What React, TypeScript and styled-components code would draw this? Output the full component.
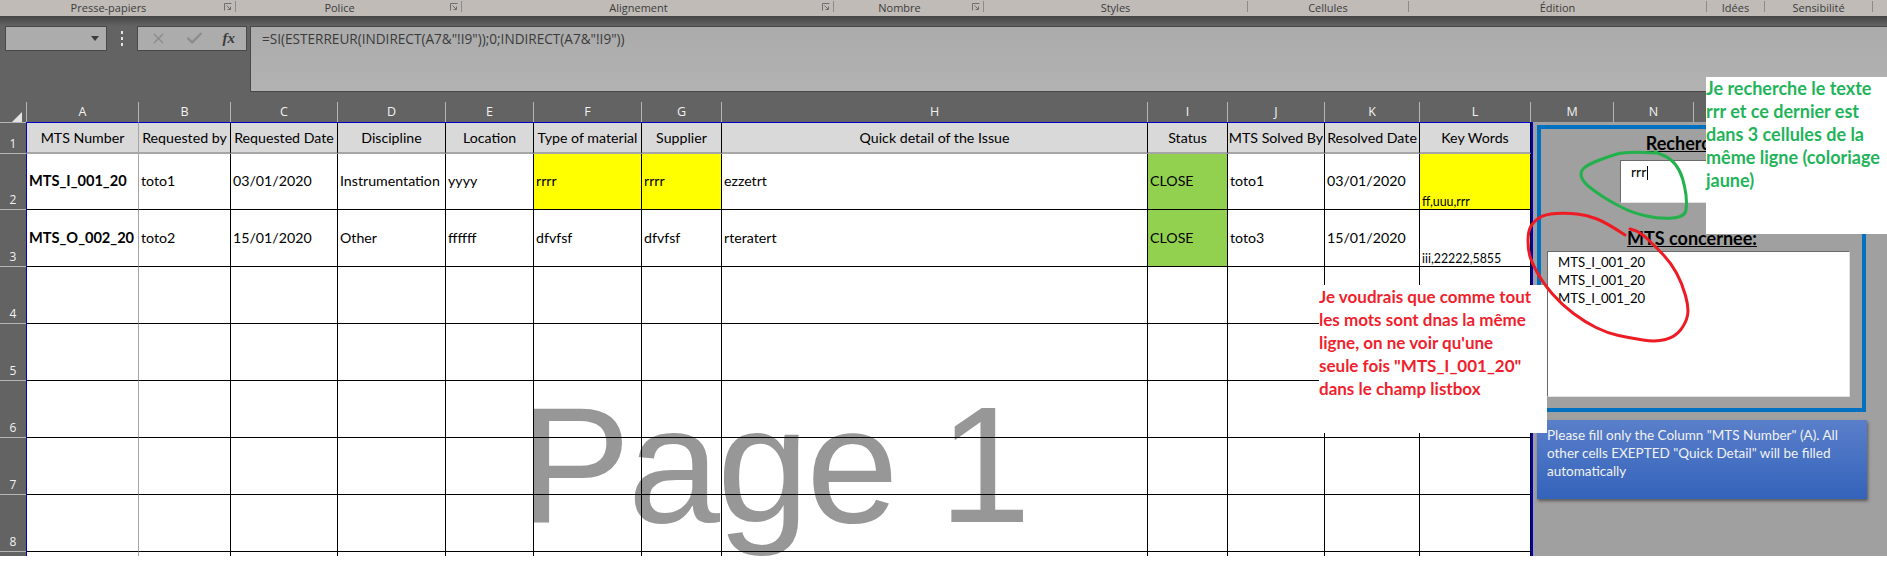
import styled, { createGlobalStyle } from "styled-components";
import { Check, X } from "lucide-react";

const COLUMNS = [
  { letter: "A", width: 113, title: "MTS Number" },
  { letter: "B", width: 92, title: "Requested by" },
  { letter: "C", width: 107, title: "Requested Date" },
  { letter: "D", width: 108, title: "Discipline" },
  { letter: "E", width: 88, title: "Location" },
  { letter: "F", width: 108, title: "Type of material" },
  { letter: "G", width: 80, title: "Supplier" },
  { letter: "H", width: 426, title: "Quick detail of the Issue" },
  { letter: "I", width: 80, title: "Status" },
  { letter: "J", width: 97, title: "MTS Solved By" },
  { letter: "K", width: 95, title: "Resolved Date" },
  { letter: "L", width: 111, title: "Key Words" },
];

const ROWS = [
  ["MTS_I_001_20", "toto1", "03/01/2020", "Instrumentation", "yyyy", "rrrr", "rrrr", "ezzetrt", "CLOSE", "toto1", "03/01/2020", "ff,uuu,rrr"],
  ["MTS_O_002_20", "toto2", "15/01/2020", "Other", "ffffff", "dfvfsf", "dfvfsf", "rteratert", "CLOSE", "toto3", "15/01/2020", "iii,22222,5855"],
];

const ROW_HEIGHTS = [32, 56, 57, 57, 57, 57, 57, 57, 57];

const RIBBON_GROUPS = [
  { label: "Presse-papiers", width: 236, launcher: true },
  { label: "Police", width: 226, launcher: true },
  { label: "Alignement", width: 372, launcher: true },
  { label: "Nombre", width: 150, launcher: true },
  { label: "Styles", width: 264, launcher: false },
  { label: "Cellules", width: 161, launcher: false },
  { label: "Édition", width: 298, launcher: false },
  { label: "Idées", width: 58, launcher: false },
  { label: "Sensibilité", width: 108, launcher: false },
];

const GREEN_STROKE: [number, number][] = [
  [1655, 153], [1627, 151], [1607, 157], [1587, 165], [1580, 172], [1583, 182], [1597, 193],
  [1613, 203], [1633, 213], [1660, 219], [1685, 217], [1687, 203], [1685, 187], [1680, 170],
  [1670, 158], [1655, 152],
];

const RED_STROKE: [number, number][] = [
  [1625, 235], [1607, 223], [1587, 215], [1567, 213], [1545, 214], [1533, 222], [1528, 232],
  [1528, 250], [1532, 263], [1543, 283], [1562, 305], [1585, 322], [1607, 333], [1630, 338],
  [1656, 342], [1675, 337], [1686, 323], [1689, 308], [1682, 283], [1671, 263], [1656, 247],
  [1640, 232], [1630, 229],
];

const smoothPath = (points: [number, number][]) => {
  let d = `M${points[0][0]} ${points[0][1]}`;
  for (let i = 1; i < points.length - 1; i++) {
    const midX = (points[i][0] + points[i + 1][0]) / 2;
    const midY = (points[i][1] + points[i + 1][1]) / 2;
    d += ` Q${points[i][0]} ${points[i][1]} ${midX} ${midY}`;
  }
  const last = points[points.length - 1];
  return `${d} L${last[0]} ${last[1]}`;
};

const GlobalStyle = createGlobalStyle`
  html, body {
    margin: 0;
    padding: 0;
    background: #fff;
  }
  * {
    box-sizing: border-box;
  }
`;

const Page = styled.div`
  position: relative;
  width: 1887px;
  height: 575px;
  overflow: hidden;
  background: #fff;
  font-family: Lato, "Liberation Sans", sans-serif;
  color: #000;
`;

const Ribbon = styled.div`
  display: flex;
  height: 16px;
  background: #c0bbb7;
`;

const RibbonGroup = styled.div<{ $width: number; $launcher: boolean }>`
  position: relative;
  width: ${(p) => p.$width}px;
  height: 11px;
  margin-top: 1px;
  padding-right: ${(p) => (p.$launcher ? 18 : 0)}px;
  border-right: 1px solid #8e8a87;
  color: #3c3c3c;
  font-family: "Open Sans", sans-serif;
  font-size: 11px;
  line-height: 13px;
  text-align: center;
  white-space: nowrap;
`;

const Launcher = styled.svg`
  position: absolute;
  right: 3px;
  top: 2px;
  width: 8px;
  height: 8px;
`;

const FormulaArea = styled.div`
  height: 76px;
  padding-top: 10px;
  display: flex;
  align-items: flex-start;
  background: linear-gradient(#454545 0, #636363 10px, #636363 10px);
`;

const NameBox = styled.div`
  width: 102px;
  height: 25px;
  margin-left: 5px;
  padding-right: 7px;
  display: flex;
  align-items: center;
  justify-content: flex-end;
  background: #acacac;
  border: 1px solid #484848;
`;

const DownArrow = styled.span`
  width: 0;
  height: 0;
  border-left: 4px solid transparent;
  border-right: 4px solid transparent;
  border-top: 5px solid #3c3c3c;
`;

const Dots = styled.div`
  width: 30px;
  height: 25px;
  display: flex;
  flex-direction: column;
  align-items: center;
  justify-content: center;
  gap: 3px;
`;

const Dot = styled.span`
  width: 2px;
  height: 3px;
  background: #e4e4e4;
`;

const FormulaButtons = styled.div`
  width: 110px;
  height: 25px;
  padding: 0 11px 0 12px;
  display: flex;
  align-items: center;
  justify-content: space-between;
  background: #acacac;
  border: 1px solid #484848;
  color: #8c8c8c;
`;

const FxLabel = styled.span`
  color: #3c3c3c;
  font-family: "Liberation Serif", serif;
  font-size: 15px;
  font-style: italic;
  font-weight: 700;
`;

const FormulaInput = styled.div`
  flex: 1;
  height: 66px;
  margin-left: 3px;
  padding: 2px 0 0 11px;
  background: linear-gradient(#ababab, #b2b2b2);
  border: 1px solid #484848;
  border-right: 0;
  color: #3a3a3a;
  font-family: "Open Sans", sans-serif;
  font-size: 13.6px;
  line-height: 20px;
`;

const ColumnBar = styled.div`
  height: 30px;
  padding-top: 10px;
  display: flex;
  background: #636363;
`;

const CornerCell = styled.div`
  width: 27px;
  padding: 6px 0 0 10px;
  border-right: 1px solid #b5b5b5;
`;

const ColumnLetter = styled.div<{ $width: number }>`
  width: ${(p) => p.$width}px;
  border-right: 1px solid #b5b5b5;
  color: #f2f2f2;
  font-family: "Open Sans", sans-serif;
  font-size: 12.5px;
  line-height: 20px;
  text-align: center;
`;

const SheetBody = styled.div`
  display: flex;
  height: 434px;
  overflow: hidden;
`;

const RowNumbers = styled.div`
  width: 26px;
  flex: none;
  background: #636363;
  border-top: 1px solid #b5b5b5;
`;

const RowNumber = styled.div<{ $height: number }>`
  height: ${(p) => p.$height}px;
  padding-bottom: 1px;
  display: flex;
  align-items: flex-end;
  justify-content: center;
  border-bottom: 1px solid #b5b5b5;
  color: #f2f2f2;
  font-family: "Open Sans", sans-serif;
  font-size: 12px;
  line-height: 17px;
`;

const Table = styled.div`
  position: relative;
  isolation: isolate;
  flex: none;
  width: 1507px;
  display: grid;
  grid-template-columns: ${COLUMNS.map((c) => `${c.width}px`).join(" ")};
  grid-template-rows: ${ROW_HEIGHTS.map((h) => `${h}px`).join(" ")};
  background: #fff;
  border-right: 3px solid #0000c8;
`;

const Watermark = styled.div`
  position: absolute;
  left: 494px;
  top: 253px;
  z-index: -1;
  color: #979797;
  font-family: "Liberation Sans", sans-serif;
  font-size: 166px;
  letter-spacing: -3px;
  line-height: 180px;
  white-space: nowrap;
`;

const Cell = styled.div<{ $first?: boolean; $fill?: string; $bold?: boolean }>`
  min-width: 0;
  padding: 0 2px 2px;
  display: flex;
  align-items: center;
  background: ${(p) => p.$fill ?? "transparent"};
  border-right: 1px solid ${(p) => (p.$first ? "#a6a6a6" : "#000")};
  border-bottom: 1px solid #000;
  border-left: ${(p) => (p.$first ? "1px solid #0000c8" : "0")};
  font-size: ${(p) => (p.$bold ? 14.6 : 14.2)}px;
  font-weight: ${(p) => (p.$bold ? 700 : 400)};
  white-space: nowrap;
`;

const HeaderCell = styled(Cell)`
  justify-content: center;
  padding: 0;
  background: #d9d9d9;
  border-top: 1px solid #0000c8;
  border-bottom: 2px solid #a6a6a6;
`;

const KeyWordsCell = styled(Cell)`
  align-items: flex-end;
  padding-bottom: 0;
  font-size: 12.4px;
  line-height: 14px;
`;

const SidePanel = styled.div`
  flex: 1;
  padding: 3px 0 0 4px;
  background: #a0a0a0;
`;

const SearchFrame = styled.div`
  width: 329px;
  height: 287px;
  padding: 3px 0 0 6px;
  display: flex;
  flex-direction: column;
  border: 4px solid #0070c0;
`;

const PanelTitle = styled.div`
  width: 290px;
  font-size: 18px;
  font-weight: 700;
  line-height: 22px;
  text-align: center;
  text-decoration: underline;
  white-space: nowrap;
`;

const SearchTitle = styled(PanelTitle)`
  padding-right: 4px;
`;

const SearchInput = styled.div`
  width: 144px;
  height: 43px;
  margin: 6px 0 24px 73px;
  padding-left: 10px;
  display: flex;
  align-items: flex-start;
  background: #fff;
  border: 1px solid;
  border-color: #6a6a6a #e2e2e2 #e2e2e2 #6a6a6a;
  font-size: 14px;
  line-height: 22px;
`;

const Caret = styled.span`
  width: 1px;
  height: 14px;
  margin: 5px 0 0 1px;
  background: #000;
`;

const ListBox = styled.div`
  width: 303px;
  height: 146px;
  margin-top: 2px;
  padding: 1px 0 0 10px;
  background: #fff;
  border: 1px solid;
  border-color: #6a6a6a #e2e2e2 #e2e2e2 #6a6a6a;
`;

const ListItem = styled.div`
  font-size: 13.2px;
  line-height: 18px;
`;

const InfoBox = styled.div`
  width: 330px;
  height: 79px;
  margin-top: 8px;
  padding: 6px 0 0 10px;
  background: linear-gradient(#5a7fca, #3463bb);
  box-shadow: 1px 2px 3px rgba(0, 0, 0, 0.45);
  color: #f2f2f2;
  font-size: 13.5px;
  line-height: 18px;
`;

const NoteBox = styled.div<{ $color: string }>`
  position: absolute;
  background: #fff;
  color: ${(p) => p.$color};
  font-weight: 700;
  line-height: 23px;
`;

const GreenNote = styled(NoteBox)`
  left: 1706px;
  top: 77px;
  width: 181px;
  height: 157px;
  font-size: 18px;
`;

const RedNote = styled(NoteBox)`
  left: 1319px;
  top: 285px;
  width: 228px;
  height: 148px;
  font-size: 17px;
`;

const Scribbles = styled.svg`
  position: absolute;
  left: 0;
  top: 0;
  pointer-events: none;
`;

const App = () => {
  return (
    <Page>
      <GlobalStyle />
      <Ribbon>
        {RIBBON_GROUPS.map((group) => (
          <RibbonGroup key={group.label} $width={group.width} $launcher={group.launcher}>
            {group.label}
            {group.launcher && (
              <Launcher viewBox="0 0 8 8" fill="none" stroke="#6f6f6f" strokeWidth="1">
                <path d="M0.5 7.5V0.5H7.5M2.5 2.5L6.5 6.5M6.5 3.5V6.5H3.5" />
              </Launcher>
            )}
          </RibbonGroup>
        ))}
      </Ribbon>

      <FormulaArea>
        <NameBox>
          <DownArrow />
        </NameBox>
        <Dots>
          <Dot />
          <Dot />
          <Dot />
        </Dots>
        <FormulaButtons>
          <X size={17} strokeWidth={2} />
          <Check size={19} strokeWidth={3} />
          <FxLabel>fx</FxLabel>
        </FormulaButtons>
        <FormulaInput>{'=SI(ESTERREUR(INDIRECT(A7&"!I9"));0;INDIRECT(A7&"!I9"))'}</FormulaInput>
      </FormulaArea>

      <ColumnBar>
        <CornerCell>
          <svg width="12" height="12" viewBox="0 0 12 12">
            <path d="M12 0V12H0Z" fill="#e4e4e4" />
          </svg>
        </CornerCell>
        {COLUMNS.map((column, i) => (
          <ColumnLetter key={column.letter} $width={i === 0 ? column.width - 1 : column.width}>
            {column.letter}
          </ColumnLetter>
        ))}
        <ColumnLetter $width={83}>M</ColumnLetter>
        <ColumnLetter $width={80}>N</ColumnLetter>
      </ColumnBar>

      <SheetBody>
        <RowNumbers>
          {ROW_HEIGHTS.map((height, i) => (
            <RowNumber key={i} $height={i === 0 ? height - 1 : height}>
              {i < 8 ? i + 1 : ""}
            </RowNumber>
          ))}
        </RowNumbers>

        <Table>
          <Watermark>Page 1</Watermark>
          {COLUMNS.map((column, i) => (
            <HeaderCell key={column.letter} $first={i === 0}>
              {column.title}
            </HeaderCell>
          ))}
          {ROWS.map((row, r) =>
            row.map((text, c) => {
              const key = `${r}-${c}`;
              const yellow = r === 0 && (c === 5 || c === 6 || c === 11);
              const fill = yellow ? "#ffff00" : c === 8 ? "#92d050" : undefined;
              return c === 11 ? (
                <KeyWordsCell key={key} $fill={fill}>
                  {text}
                </KeyWordsCell>
              ) : (
                <Cell key={key} $first={c === 0} $bold={c === 0} $fill={fill}>
                  {text}
                </Cell>
              );
            })
          )}
          {ROW_HEIGHTS.slice(3).flatMap((_, r) =>
            COLUMNS.map((column, c) => <Cell key={`${r}-${column.letter}`} $first={c === 0} />)
          )}
        </Table>

        <SidePanel>
          <SearchFrame>
            <SearchTitle>Recherche:</SearchTitle>
            <SearchInput>
              rrr
              <Caret />
            </SearchInput>
            <PanelTitle>MTS concernee:</PanelTitle>
            <ListBox>
              <ListItem>MTS_I_001_20</ListItem>
              <ListItem>MTS_I_001_20</ListItem>
              <ListItem>MTS_I_001_20</ListItem>
            </ListBox>
          </SearchFrame>
          <InfoBox>
            Please fill only the Column "MTS Number" (A). All other cells EXEPTED "Quick Detail" will be filled
            automatically
          </InfoBox>
        </SidePanel>
      </SheetBody>

      <GreenNote $color="#1fb45a">
        Je recherche le texte
        <br />
        rrr et ce dernier est
        <br />
        dans 3 cellules de la
        <br />
        même ligne (coloriage
        <br />
        jaune)
      </GreenNote>

      <RedNote $color="#f01f2e">
        Je voudrais que comme tout
        <br />
        les mots sont dnas la même
        <br />
        ligne, on ne voir qu'une
        <br />
        seule fois "MTS_I_001_20"
        <br />
        dans le champ listbox
      </RedNote>

      <Scribbles width="1887" height="575" fill="none" strokeLinecap="round" strokeLinejoin="round">
        <path d={smoothPath(GREEN_STROKE)} stroke="#22b14c" strokeWidth="3" />
        <path d={smoothPath(RED_STROKE)} stroke="#ed1c24" strokeWidth="3" />
      </Scribbles>
    </Page>
  );
};

export default App;
